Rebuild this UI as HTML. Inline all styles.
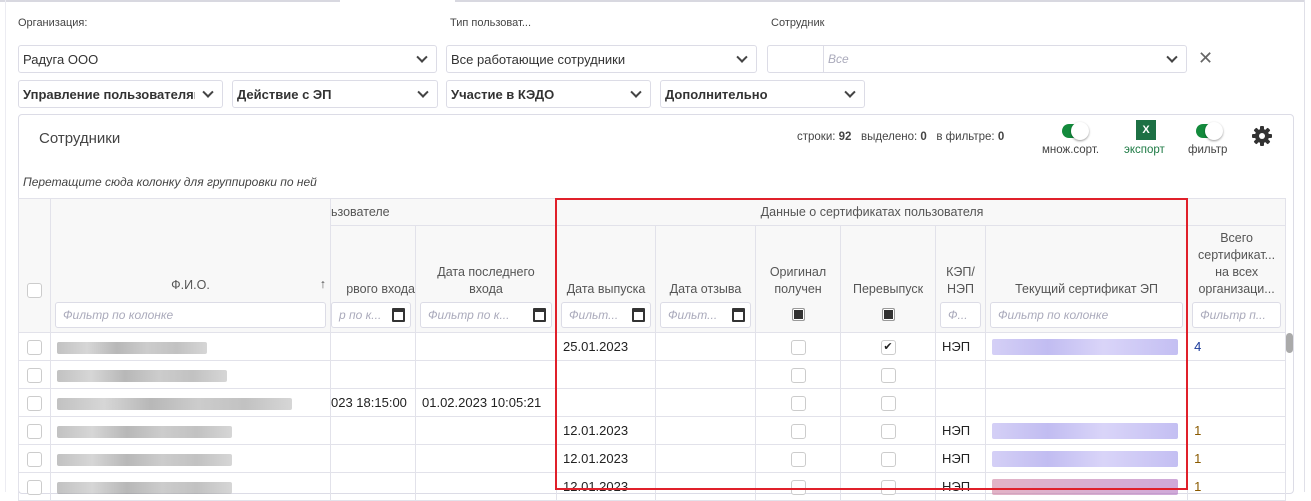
<!DOCTYPE html>
<html><head><meta charset="utf-8"><style>
*{box-sizing:border-box;margin:0;padding:0}
body{width:1311px;height:492px;overflow:hidden;background:#fff;font-family:"Liberation Sans",sans-serif;font-size:13px;color:#333;position:relative}
.a{position:absolute}
.lbl{font-size:11px;color:#444}
.sel{position:absolute;border:1px solid #dcdce6;border-radius:3px;height:28px;padding:6px 0 0 4px;font-size:13px;background:#fff;white-space:nowrap;overflow:hidden}
.sel.b{font-weight:bold}
.chev{position:absolute;right:10px;top:10px;width:8px;height:8px;border-right:2px solid #444;border-bottom:2px solid #444;transform:rotate(45deg) translate(-2px,-2px)}
table{position:absolute;left:18px;top:198px;border-collapse:collapse;table-layout:fixed;width:1267px}
td,th{border:1px solid #e2e2ea;font-weight:normal;overflow:hidden;white-space:nowrap}
th{background:#f8f8f8;color:#555;font-size:12.5px;text-align:center;vertical-align:bottom;line-height:17px}
td{height:28px;font-size:13px;padding-left:6px;color:#222}
.cb{display:inline-block;width:15px;height:15px;border:1px solid #ccc;border-radius:3px;background:#fff;vertical-align:middle}
.fi{display:block;margin:4px 4px 4px;height:26px;border:1px solid #dcdce6;border-radius:3px;background:#fff;font-style:italic;color:#aab;font-size:12px;text-align:left;padding:5px 0 0 7px;position:relative;overflow:hidden;line-height:14px}
.cal{position:absolute;right:5px;top:5px;width:13px;height:14px;border:2px solid #333;border-top-width:4px;border-radius:1px}
.sq{display:inline-block;width:13px;height:13px;border:1px solid #999;border-radius:2px;background:#333;box-shadow:inset 0 0 0 1px #fff;margin:10px 0 6px}
.blur{display:inline-block;height:12px;border-radius:2px;vertical-align:middle;opacity:.6}
.nm{background:linear-gradient(90deg,#999 0,#bbb 20%,#888 40%,#aaa 60%,#999 80%,#bbb 100%)}
.ct{background:linear-gradient(90deg,#b8b0f0,#9890e8 30%,#c0b8f4 60%,#9c94ea);height:16px}
.tg{position:absolute;width:26px;height:14px;border-radius:7px;background:#138a3c}
.tg:after{content:"";position:absolute;right:-1px;top:-2px;width:18px;height:18px;border-radius:50%;background:#fff;box-shadow:0 1px 2px rgba(0,0,0,.4)}
</style></head><body>
<div class="a" style="left:0;top:0;width:340px;height:2px;background:#d8d8e0"></div>
<div class="a" style="left:455px;top:0;width:850px;height:2px;background:#d8d8e0"></div>
<div class="a" style="left:1304px;top:0;width:1px;height:492px;background:#e0e0e8"></div>
<div class="a" style="left:5px;top:0;width:1px;height:492px;background:#ececf2"></div>
<div class="a lbl" style="left:18px;top:17px">Организация:</div>
<div class="a lbl" style="left:450px;top:17px">Тип пользоват...</div>
<div class="a lbl" style="left:771px;top:17px">Сотрудник</div>
<div class="sel" style="left:18px;top:45px;width:419px">Радуга ООО<span class="chev"></span></div>
<div class="sel" style="left:446px;top:45px;width:311px">Все работающие сотрудники<span class="chev"></span></div>
<div class="sel" style="left:767px;top:45px;width:420px"><span style="position:absolute;left:55px;top:0;width:1px;height:28px;background:#dcdce6"></span><span style="position:absolute;left:60px;top:6px;font-style:italic;color:#aab;font-size:12px">Все</span><span class="chev"></span></div>
<div class="a" style="left:1198px;top:48px;font-size:18px;color:#666">✕</div>
<div class="sel b" style="left:18px;top:80px;width:205px"><span style="display:inline-block;width:172px;overflow:hidden">Управление пользователями</span><span class="chev"></span></div>
<div class="sel b" style="left:232px;top:80px;width:206px">Действие с ЭП<span class="chev"></span></div>
<div class="sel b" style="left:446px;top:80px;width:205px">Участие в КЭДО<span class="chev"></span></div>
<div class="sel b" style="left:660px;top:80px;width:205px">Дополнительно<span class="chev"></span></div>
<div class="a" style="left:18px;top:114px;width:1276px;height:380px;border:1px solid #dcdce6;border-radius:4px"></div>
<div class="a" style="left:39px;top:130px;font-size:15px;color:#444">Сотрудники</div>
<div class="a" style="left:797px;top:131px;font-size:11.5px;color:#444">строки: <b>92</b> &nbsp; выделено: <b>0</b> &nbsp; в фильтре: <b>0</b></div>
<div class="tg" style="left:1062px;top:124px"></div>
<div class="a" style="left:1042px;top:144px;font-size:11.5px;color:#444">множ.сорт.</div>
<div class="a" style="left:1136px;top:120px;width:20px;height:20px;background:#1d7044;color:#fff;font-size:11px;font-weight:bold;text-align:center;line-height:20px">X</div>
<div class="a" style="left:1124px;top:144px;font-size:11.5px;color:#1d7a44">экспорт</div>
<div class="tg" style="left:1196px;top:124px"></div>
<div class="a" style="left:1188px;top:144px;font-size:11.5px;color:#444">фильтр</div>
<svg class="a" style="left:1252px;top:126px" width="20" height="20" viewBox="0 0 20 20"><g fill="#333"><circle cx="10" cy="10" r="7"/><rect x="8" y="0" width="4" height="20" rx="1"/><rect x="8" y="0" width="4" height="20" rx="1" transform="rotate(45 10 10)"/><rect x="8" y="0" width="4" height="20" rx="1" transform="rotate(90 10 10)"/><rect x="8" y="0" width="4" height="20" rx="1" transform="rotate(135 10 10)"/></g><circle cx="10" cy="10" r="3" fill="#fff"/></svg>
<div class="a" style="left:23px;top:175px;font-size:12px;font-style:italic;color:#444">Перетащите сюда колонку для группировки по ней</div>
<table>
<colgroup><col style="width:32px"><col style="width:280px"><col style="width:85px"><col style="width:141px"><col style="width:99px"><col style="width:100px"><col style="width:85px"><col style="width:95px"><col style="width:50px"><col style="width:202px"><col style="width:98px"></colgroup>
<tr style="height:27px"><th rowspan="2" style="vertical-align:middle;padding-top:50px"><span class="cb"></span></th><th rowspan="2" style="position:relative"><div style="padding-bottom:4px">Ф.И.О.<span style="position:absolute;right:4px;bottom:39px">↑</span></div><span class="fi">Фильтр по колонке</span></th><th colspan="2" style="vertical-align:middle;text-align:left">ьзователе</th><th colspan="6" style="vertical-align:middle">Данные о сертификатах пользователя</th><th style="border-bottom:none"></th></tr>
<tr style="height:107px"><th style="text-align:right">рвого входа<span class="fi" style="margin-left:0">р по к...<i class="cal"></i></span></th><th>Дата последнего<br>входа<span class="fi">Фильтр по к...<i class="cal"></i></span></th><th>Дата выпуска<span class="fi">Фильт...<i class="cal"></i></span></th><th>Дата отзыва<span class="fi">Фильт...<i class="cal"></i></span></th><th>Оригинал<br>получен<br><span class="sq"></span></th><th>Перевыпуск<br><span class="sq"></span></th><th>КЭП/<br>НЭП<span class="fi">Ф...</span></th><th>Текущий сертификат ЭП<span class="fi">Фильтр по колонке</span></th><th>Всего<br>сертификат...<br>на всех<br>организаци...<span class="fi">Фильтр п...</span></th></tr>
<tr><td style="text-align:center;padding:0"><span class="cb"></span></td><td><span class="blur nm" style="width:150px"></span></td><td></td><td></td><td>25.01.2023</td><td></td><td style="text-align:center;padding:0"><span class="cb"></span></td><td style="text-align:center;padding:0"><span class="cb" style="font-size:11px;line-height:13px">✔</span></td><td>НЭП</td><td><span class="blur ct" style="width:186px"></span></td><td style="color:#1a3a9a">4</td></tr>
<tr><td style="text-align:center;padding:0"><span class="cb"></span></td><td><span class="blur nm" style="width:170px"></span></td><td></td><td></td><td></td><td></td><td style="text-align:center;padding:0"><span class="cb"></span></td><td style="text-align:center;padding:0"><span class="cb"></span></td><td></td><td></td><td></td></tr>
<tr><td style="text-align:center;padding:0"><span class="cb"></span></td><td><span class="blur nm" style="width:235px"></span></td><td style="padding:0">023 18:15:00</td><td>01.02.2023 10:05:21</td><td></td><td></td><td style="text-align:center;padding:0"><span class="cb"></span></td><td style="text-align:center;padding:0"><span class="cb"></span></td><td></td><td></td><td></td></tr>
<tr><td style="text-align:center;padding:0"><span class="cb"></span></td><td><span class="blur nm" style="width:175px"></span></td><td></td><td></td><td>12.01.2023</td><td></td><td style="text-align:center;padding:0"><span class="cb"></span></td><td style="text-align:center;padding:0"><span class="cb"></span></td><td>НЭП</td><td><span class="blur ct" style="width:186px"></span></td><td style="color:#8a5a00">1</td></tr>
<tr><td style="text-align:center;padding:0"><span class="cb"></span></td><td><span class="blur nm" style="width:175px"></span></td><td></td><td></td><td>12.01.2023</td><td></td><td style="text-align:center;padding:0"><span class="cb"></span></td><td style="text-align:center;padding:0"><span class="cb"></span></td><td>НЭП</td><td><span class="blur ct" style="width:186px"></span></td><td style="color:#8a5a00">1</td></tr>
<tr><td style="text-align:center;padding:0"><span class="cb"></span></td><td><span class="blur nm" style="width:175px"></span></td><td></td><td></td><td>12.01.2023</td><td></td><td style="text-align:center;padding:0"><span class="cb"></span></td><td style="text-align:center;padding:0"><span class="cb"></span></td><td>НЭП</td><td><span class="blur ct" style="width:186px;background:linear-gradient(90deg,#d080a0,#b070c0)"></span></td><td style="color:#8a5a00">1</td></tr>
</table>
<div class="a" style="left:1286px;top:333px;width:7px;height:20px;border-radius:4px;background:#aaa"></div>
<div class="a" style="left:555px;top:198px;width:633px;height:292px;border:2px solid #e0202a"></div>
</body></html>
